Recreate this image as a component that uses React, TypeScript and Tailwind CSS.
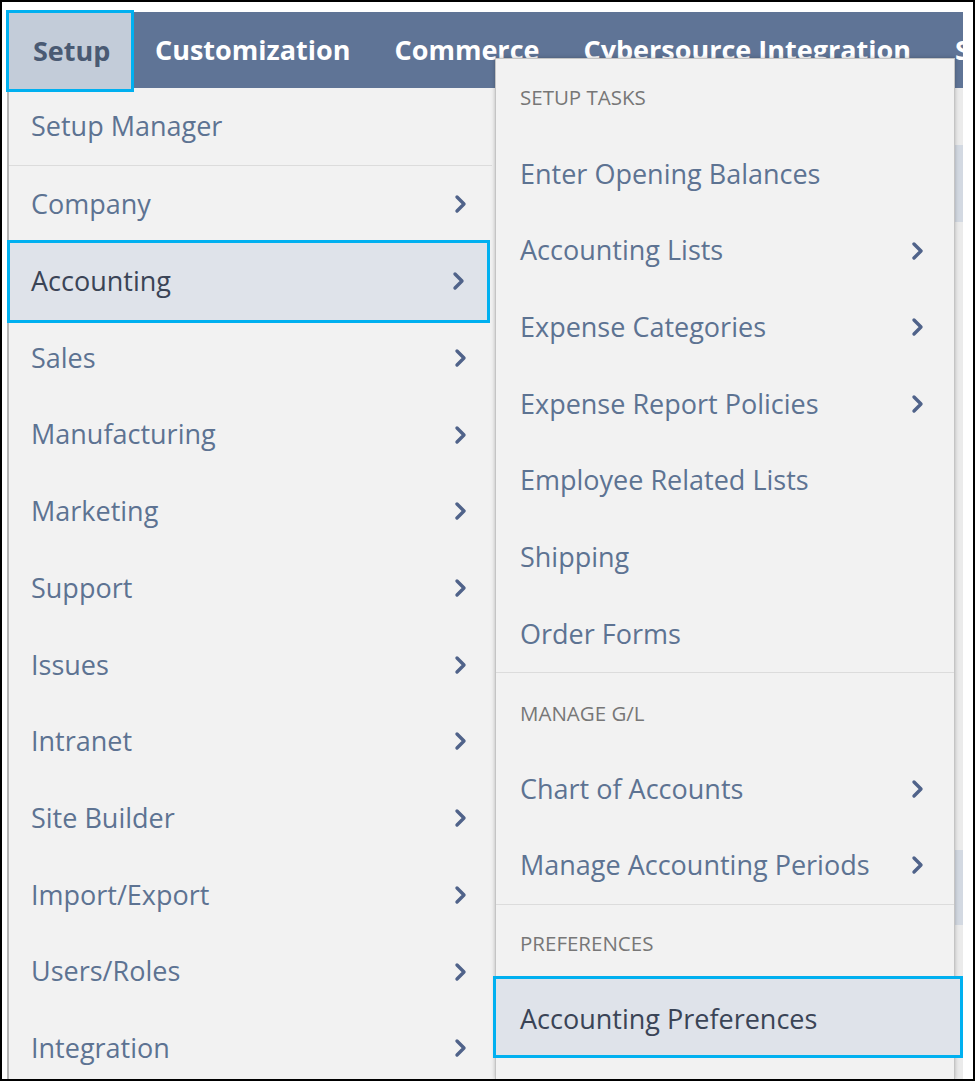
import React from 'react';

type Row = { label: string; sub?: boolean };

const leftItems: Row[] = [
    { label: 'Company', sub: true },
    { label: 'Accounting', sub: true },
    { label: 'Sales', sub: true },
    { label: 'Manufacturing', sub: true },
    { label: 'Marketing', sub: true },
    { label: 'Support', sub: true },
    { label: 'Issues', sub: true },
    { label: 'Intranet', sub: true },
    { label: 'Site Builder', sub: true },
    { label: 'Import/Export', sub: true },
    { label: 'Users/Roles', sub: true },
    { label: 'Integration', sub: true },
];

const setupTasks: Row[] = [
    { label: 'Enter Opening Balances' },
    { label: 'Accounting Lists', sub: true },
    { label: 'Expense Categories', sub: true },
    { label: 'Expense Report Policies', sub: true },
    { label: 'Employee Related Lists' },
    { label: 'Shipping' },
    { label: 'Order Forms' },
];

const manageGl: Row[] = [
    { label: 'Chart of Accounts', sub: true },
    { label: 'Manage Accounting Periods', sub: true },
];

const Chevron: React.FC = () => (
    <svg width="14" height="20" viewBox="0 0 14 20" fill="none">
        <path d="M3 3l7 7-7 7" stroke="#50638a" strokeWidth="3.4" strokeLinecap="round" strokeLinejoin="round" />
    </svg>
);

const MenuRow: React.FC<{ row: Row; pad: string }> = ({ row, pad }) => (
    <div className={`flex items-center justify-between h-[76.7px] text-[#5d7392] ${pad}`}>
        <span>{row.label}</span>
        {row.sub && <Chevron />}
    </div>
);

const navItems = ['Customization', 'Commerce', 'Cybersource Integration', 'Setup'];

export default function App() {
    return (
        <div
            className="w-[975px] h-[1081px] border-2 border-black bg-white overflow-hidden pl-[5px] pt-[10px] pr-[10px]"
            style={{ fontFamily: '"Open Sans", "Noto Sans", sans-serif' }}
        >
            <div className="relative flex flex-col h-full">
                {/* Top nav */}
                <div className="flex h-[76px] bg-[#5f7496] text-[27px] font-bold text-white whitespace-nowrap shrink-0">
                    <div className="relative z-10 w-[128px] h-[82px] -mt-[2px] -ml-[1px] flex items-center pl-[24px] border-[3px] border-[#00b0f0] bg-[#c3ccd9] text-[#4a5a73] shrink-0">
                        Setup
                    </div>
                    <div className="flex-1 flex items-center gap-[44px] pl-[21px] overflow-hidden">
                        {navItems.map((n, i) => (
                            <div key={i}>{n}</div>
                        ))}
                    </div>
                </div>

                {/* Body */}
                <div className="flex flex-1 min-h-0">
                    <div className="w-[485px] bg-[#f2f2f2] border-l-2 border-[#b5b5b5] text-[27px] shrink-0">
                        <div className="flex items-center h-[78px] pl-[22px] text-[#5d7392] border-b border-[#dcdcdc]">
                            Setup Manager
                        </div>
                        {leftItems.map((r) =>
                            r.label === 'Accounting' ? (
                                <div
                                    key={r.label}
                                    className="relative z-10 flex items-center justify-between h-[83px] -my-[3px] -ml-[2px] mr-[2px] pl-[21px] pr-[21px] border-[3px] border-[#00b0f0] bg-[#dfe3ea] text-[#3a4456]"
                                >
                                    <span>{r.label}</span>
                                    <Chevron />
                                </div>
                            ) : (
                                <MenuRow key={r.label} row={r} pad="pl-[22px] pr-[24px]" />
                            )
                        )}
                    </div>
                    <div className="flex-1 bg-[#f2f2f2]" />
                    <div className="w-[8px] bg-[#ebebeb] flex flex-col">
                        <div className="mt-[57px] h-[77px] bg-[#d3d9e2]" />
                        <div className="mt-[628px] h-[75px] bg-[#d3d9e2]" />
                    </div>
                </div>

                {/* Accounting flyout */}
                <div className="absolute left-[488px] top-[46px] bottom-0 w-[460px] bg-[#f2f2f2] border-l border-r border-t border-[#c4c4c4] shadow-[0_0_4px_rgba(0,0,0,0.25)] text-[27px]">
                    <div className="flex items-center h-[76.6px] pl-6 text-[20.5px] text-[#777777]">SETUP TASKS</div>
                    {setupTasks.map((r) => (
                        <MenuRow key={r.label} row={r} pad="pl-6 pr-[29px]" />
                    ))}
                    <div className="border-t border-[#dcdcdc]" />
                    <div className="flex items-center h-[77px] pt-[3px] pl-6 text-[20.5px] text-[#777777]">MANAGE G/L</div>
                    {manageGl.map((r) => (
                        <MenuRow key={r.label} row={r} pad="pl-6 pr-[29px]" />
                    ))}
                    <div className="border-t border-[#dcdcdc]" />
                    <div className="flex items-center h-[71px] pt-[7px] pl-6 text-[20.5px] text-[#777777]">PREFERENCES</div>
                    <div className="relative z-10 flex items-center h-[82px] -ml-[3px] -mr-[9px] pt-[4px] pl-[24px] border-[3px] border-[#00b0f0] bg-[#dfe3ea] text-[#3a4456]">
                        Accounting Preferences
                    </div>
                </div>
            </div>
        </div>
    );
}
